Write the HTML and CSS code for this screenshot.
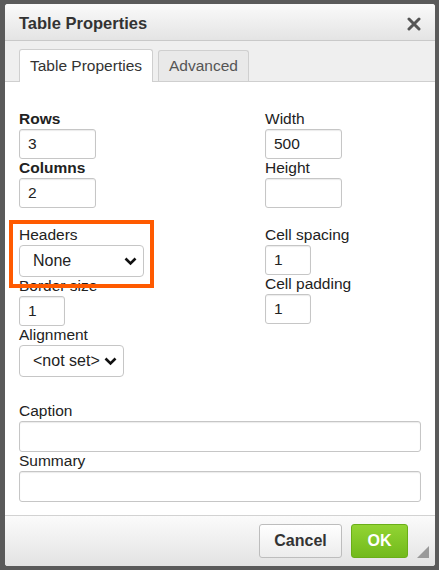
FILE: index.html
```html
<!DOCTYPE html>
<html lang="en">

<head>
    <meta charset="UTF-8">
    <meta name="viewport" content="width=device-width, initial-scale=1.0">
    <title>Table Properties</title>

    <link rel="stylesheet" href="styles.css">
</head>

<body>
    <div class="dialog">
        <!-- Title bar -->
        <div class="title-bar">
            <span class="title">Table Properties</span>
            <svg class="close" width="14" height="14" viewBox="0 0 14 14"><path d="M2 2 L12 12 M12 2 L2 12" stroke="#555" stroke-width="3" stroke-linecap="round"/></svg>
        </div>

        <!-- Tabs -->
        <div class="tabs">
            <div class="tab active">Table Properties</div>
            <div class="tab">Advanced</div>
        </div>

        <!-- Form -->
        <div class="content">
            <div class="columns">
                <div class="col">
                    <div class="field">
                        <label class="bold">Rows</label>
                        <div class="input w-small">3</div>
                    </div>
                    <div class="field">
                        <label class="bold">Columns</label>
                        <div class="input w-small">2</div>
                    </div>
                    <div class="field highlight spaced">
                        <label>Headers</label>
                        <div class="select w-headers">
                            <span>None</span>
                            <svg width="13" height="9" viewBox="0 0 13 9"><path d="M1.5 1.5 L6.5 6.5 L11.5 1.5" fill="none" stroke="#111" stroke-width="2.6"/></svg>
                        </div>
                    </div>
                    <div class="field">
                        <label>Border size</label>
                        <div class="input w-tiny">1</div>
                    </div>
                    <div class="field">
                        <label>Alignment</label>
                        <div class="select w-align">
                            <span>&lt;not set&gt;</span>
                            <svg width="13" height="9" viewBox="0 0 13 9"><path d="M1.5 1.5 L6.5 6.5 L11.5 1.5" fill="none" stroke="#111" stroke-width="2.6"/></svg>
                        </div>
                    </div>
                </div>
                <div class="col">
                    <div class="field">
                        <label>Width</label>
                        <div class="input w-small">500</div>
                    </div>
                    <div class="field">
                        <label>Height</label>
                        <div class="input w-small"></div>
                    </div>
                    <div class="field spaced">
                        <label>Cell spacing</label>
                        <div class="input w-tiny">1</div>
                    </div>
                    <div class="field">
                        <label>Cell padding</label>
                        <div class="input w-tiny">1</div>
                    </div>
                </div>
            </div>

            <div class="field caption">
                <label>Caption</label>
                <div class="input w-full"></div>
            </div>
            <div class="field">
                <label>Summary</label>
                <div class="input w-full"></div>
            </div>
        </div>

        <!-- Footer -->
        <div class="footer">
            <button class="btn cancel">Cancel</button>
            <button class="btn ok">OK</button>
            <div class="resize"></div>
        </div>
    </div>
</body>

</html>
```

FILE: styles.css
```css
body {
    margin: 0;
    padding: 4px 4px 4px 5px;
    background-color: #5a5a5a;
    font-family: "Liberation Sans", Arial, sans-serif;
    color: #222;
}

.dialog {
    width: 430px;
    height: 562px;
    background-color: #fff;
    border-radius: 3px;
    display: flex;
    flex-direction: column;
    overflow: hidden;
}

.title-bar {
    height: 36px;
    flex-shrink: 0;
    display: flex;
    align-items: center;
    justify-content: space-between;
    padding: 0 14px;
    background: linear-gradient(#fafafa, #e4e4e4);
    border-bottom: 1px solid #c9c9c9;
}

.title {
    font-size: 16.5px;
    font-weight: bold;
    color: #333;
    padding-top: 3px;
}

.close {
    margin-top: 4px;
}

.tabs { /* Barra de abas */
    height: 40px;
    flex-shrink: 0;
    display: flex;
    align-items: flex-end;
    gap: 5px;
    padding-left: 14px;
    background-color: #efefef;
    border-bottom: 1px solid #cfcfcf;
}

.tab {
    height: 30px;
    line-height: 30px;
    padding: 0 10px;
    font-size: 15.5px;
    color: #555;
    background-color: #e9e9e9;
    border: 1px solid #cfcfcf;
    border-bottom: none;
    border-radius: 3px 3px 0 0;
}

.tab.active {
    height: 32px;
    line-height: 32px;
    color: #333;
    background-color: #fff;
    margin-bottom: -1px;
}

.content {
    flex: 1;
    padding: 28px 14px 0 14px;
}

.columns {
    display: flex;
}

.col {
    display: flex;
    flex-direction: column;
}

.col:first-child {
    width: 246px;
}

.field {
    display: flex;
    flex-direction: column;
    align-items: flex-start;
}

.field label {
    font-size: 15.5px;
    line-height: 17px;
    margin-bottom: 2px;
    color: #222;
}

.field label.bold {
    font-weight: bold;
}

.spaced {
    margin-top: 18px;
}

.caption {
    margin-top: 25px;
}

.input {
    height: 30px;
    box-sizing: border-box;
    border: 1px solid #c6c6c6;
    border-radius: 3px;
    box-shadow: inset 0 1px 1px rgba(0, 0, 0, 0.08);
    font-size: 15.5px;
    line-height: 28px;
    padding-left: 8px;
    color: #222;
    background-color: #fff;
}

.w-small { width: 77px; }
.w-tiny { width: 46px; }
.w-full { width: 402px; height: 31px; }

.select {
    height: 32px;
    box-sizing: border-box;
    border: 1px solid #c6c6c6;
    border-radius: 4px;
    display: flex;
    align-items: center;
    justify-content: space-between;
    padding: 0 6px 0 13px;
    font-size: 16px;
    color: #222;
    background-color: #fff;
}

.w-headers { width: 125px; }
.w-align { width: 105px; }

.highlight {
    position: relative;
}

.highlight::after { /* Destaque laranja em volta do campo */
    content: "";
    position: absolute;
    top: -6px;
    left: -10px;
    width: 145px;
    height: 68px;
    box-sizing: border-box;
    border: 4px solid #ff5a00;
}

.footer {
    height: 50px;
    flex-shrink: 0;
    position: relative;
    display: flex;
    align-items: center;
    justify-content: flex-end;
    gap: 9px;
    padding-right: 27px;
    background: linear-gradient(#fbfbfb, #e3e3e3);
    border-top: 1px solid #d2d2d2;
}

.btn {
    height: 34px;
    border-radius: 3px;
    font-family: "Liberation Sans", Arial, sans-serif;
    font-size: 16px;
    font-weight: bold;
    cursor: pointer;
}

.cancel {
    width: 83px;
    color: #333;
    background: linear-gradient(#ffffff, #ececec);
    border: 1px solid #bdbdbd;
}

.ok {
    width: 57px;
    color: #fff;
    background: linear-gradient(#92d433, #72ba1c);
    border: 1px solid #6aae18;
}

.resize { /* Triangulo de redimensionar */
    position: absolute;
    right: 6px;
    bottom: 8px;
    width: 0;
    height: 0;
    border-left: 12px solid transparent;
    border-bottom: 12px solid #9a9a9a;
}
```
